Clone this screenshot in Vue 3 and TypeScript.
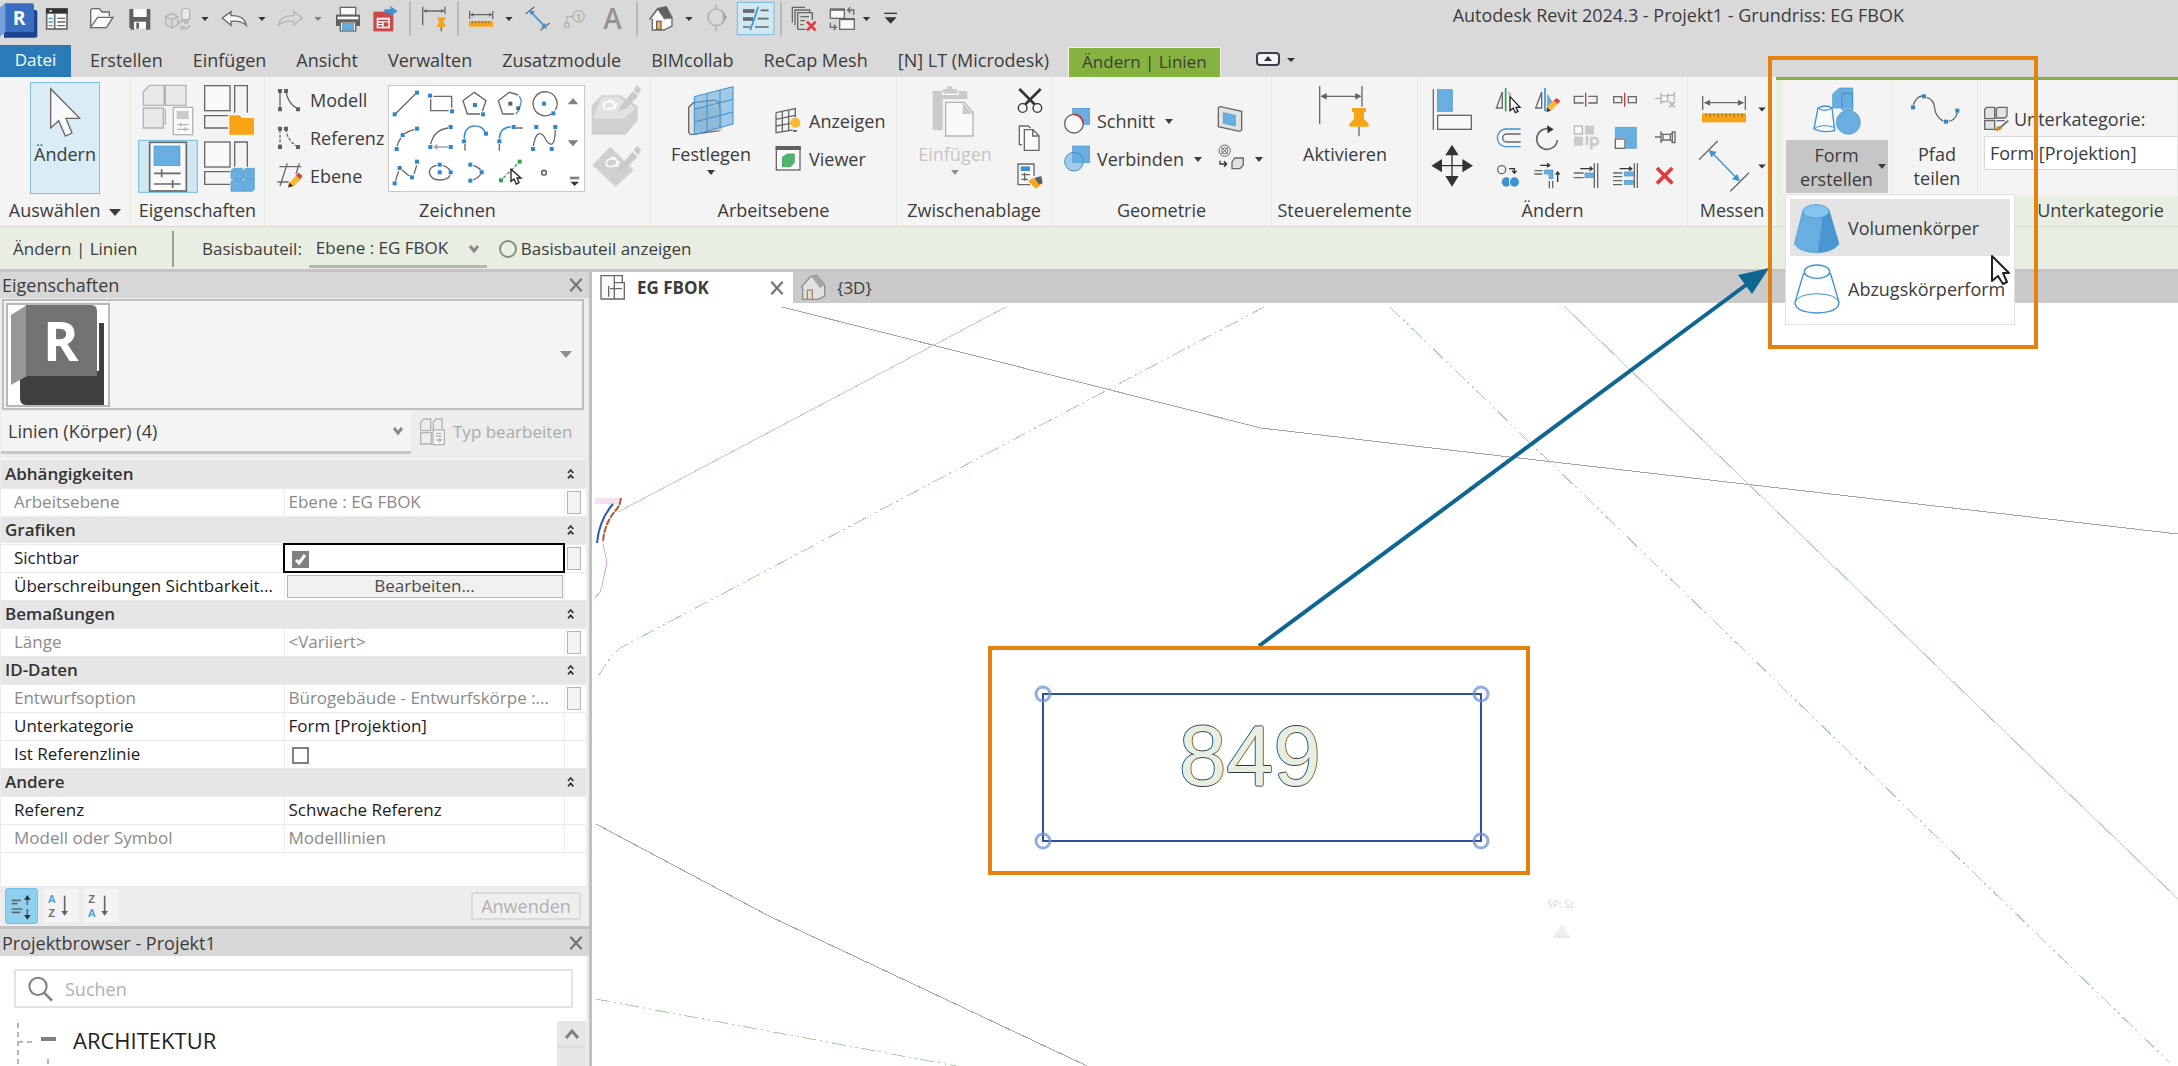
<script setup lang="ts">
import { h, ref } from 'vue'

type Icon = [number, number, number, number, string]

const P = (d: string, c = '') => `<path d="${d}" class="${c}"/>`
const R = (x: number, y: number, w: number, hh: number, c = '') =>
  `<rect x="${x}" y="${y}" width="${w}" height="${hh}" class="${c}"/>`
const C = (x: number, y: number, r: number, c = '') => `<circle cx="${x}" cy="${y}" r="${r}" class="${c}"/>`
const dots = (...xy: number[]) => {
  let s = ''
  for (let i = 0; i < xy.length; i += 2) s += R(xy[i] - 6, xy[i + 1] - 6, 12, 12, 'dot')
  return s
}
const arrow = (w: number, hh: number, c = 'ink'): Icon => [
  0, 0, w, hh, P(`M${w / 2 - 11} ${hh / 2 - 6}h22l-11 12z`, c),
]
const bar = (w: number): Icon => [0, 0, w, 114, P(`M${w / 2} 5v102`, 'sepline')]

const icons: Record<string, Icon> = {
  // quick access bar
  logo: [0, 0, 120, 114, P('M12 30h94q6 0 6 6v71q0 6-6 6H12z', 'navy') + P('M0 24L16 10h80q6 0 6 6v80H16L0 108z', 'royal') + P('M0 24L16 10v86L0 110z', 'sky') + '<text x="38" y="74" class="logor">R</text>'],
  menu: [120, 0, 105, 114, R(140, 27, 61, 60, 'k thick w') + R(138, 25, 65, 16, 'ink') + P('M148 33h8', 'ws') + P('M164 41v46', 'k thick') + P('M172 55h24M172 66h24M172 77h24', 'k') + P('M146 55h12M146 66h12M146 77h12', 'bs')],
  open: [225, 0, 138, 114, P('M272 80V30l4-4h22l8 10h22v12', 'k w') + P('M271 83l22-31h46l-20 31z', 'k w')],
  save: [363, 0, 111, 114, P('M388 27h63v62H394l-6-7z', 'kf') + R(400, 27, 40, 24, 'w') + R(402, 65, 36, 24, 'w') + R(409, 68, 8, 18, 'kf')],
  sync: [474, 0, 111, 114, P('M497 50l18-10 18 10v24l-18 10-18-10zM497 50l18 9 18-9M515 59v24', 'g') + P('M545 30q12-10 24 0v26q-12 8-24 0z', 'g gf') + P('M535 72q8-14 24-6M570 76q-8 14-24 8M560 58l4 10-12 2M545 92l-2-12 12 0', 'g')],
  undo: [645, 0, 111, 114, P('M667 54l26-19v12q40-2 46 29q-18-16-46-12v12z', 'k w')],
  redo: [816, 0, 108, 114, P('M907 54l-26-19v12q-40-2-46 29q18-16 46-12v12z', 'g')],
  print: [981, 0, 117, 114, R(1018, 22, 46, 24, 'k w') + P('M1005 44h72v34h-72z', 'kf') + R(1010, 50, 62, 8, 'w') + R(1018, 66, 46, 27, 'k w') + R(1024, 70, 34, 20, 'bf')],
  export: [1098, 0, 111, 114, R(1117, 35, 60, 59, 'redf') + R(1127, 53, 40, 32, 'w') + P('M1132 61h30M1132 70h12M1132 78h12', 'rs') + R(1148, 67, 14, 13, 'redf') + P('M1150 28h18V18l22 16-22 14V38h-18z', 'bd')],
  dimpin: [1245, 0, 108, 114, P('M1265 20v56M1332 20v22M1268 33h60', 'k') + P('M1268 33l9-6v12zM1329 33l-9-6v12z', 'kf') + P('M1309 52h24v7h-4v12l8 9h-32l8-9V59h-4z', 'of') + P('M1321 80v14', 'k')],
  ruler: [252, 0, 105, 114, P('M269 33v24M338 33v24M272 44h62', 'k') + P('M271 44l9-6v12zM336 44l-9-6v12z', 'kf') + R(267, 63, 72, 17, 'of') + P('M277 63v7M287 63v7M297 63v7M307 63v7M317 63v7M327 63v7', 'k thin')],
  meas: [420, 0, 111, 114, P('M440 41l26-20M484 91l28-22', 'k') + P('M456 36l42 44', 'bs thick') + P('M450 30l18 5-12 11zM504 86l-18-5 12-11z', 'bd')],
  tag: [531, 0, 114, 114, R(557, 70, 12, 12, 'g') + P('M563 70V50h20', 'g') + C(599, 49, 17, 'g') + '<text x="592" y="59" class="tagn">1</text>'],
  letter: [645, 0, 111, 114, '<text x="673" y="87" class="biga">A</text>'],
  house: [792, 0, 108, 114, P('M812 58l24-32 26-6 17 32v26l-24 12h-35V56', 'k w') + P('M836 26l26-6 17 36h-20z', 'kf') + R(833, 64, 13, 24, 'k yf') + P('M812 58l24-32 22 32', 'k')],
  diamond: [960, 0, 108, 114, C(1012, 52, 25, 'g thick') + P('M1012 14v12M1012 78v16', 'g thick') + P('M1026 28l18 24-18 24q12-24 0-48z', 'gd')],
  thin: [1068, 0, 126, 114, R(1075, 7, 110, 97, 'sel') + P('M1092 33h34', 'k xthick') + P('M1092 57h30', 'k xthick') + P('M1092 81h22M1145 31h24M1136 56h33M1128 81h41', 'k thick') + P('M1138 20l-24 70', 'bs thick')],
  closeh: [1218, 0, 117, 114, P('M1240 68V22h38M1248 76V30h44v10', 'k') + P('M1256 88V38h44v22M1256 88h24', 'k') + P('M1264 50h26M1264 62h14M1264 74h10', 'k') + P('M1284 65l26 26M1310 65l-26 26', 'rx')],
  switchw: [1335, 0, 105, 114, R(1354, 27, 42, 28, 'k w') + P('M1354 30h42', 'k thick') + R(1382, 56, 44, 32, 'k w') + P('M1382 58h44', 'k thick') + P('M1408 30h16v14M1414 22l-8 8 8 8M1354 68v14h16M1364 74l8 8-8 8', 'k')],
  custom: [1485, 0, 75, 114, P('M1516 40h38', 'inks') + P('M1517 52h36l-18 19z', 'ink')],
  arr60: arrow(60, 114),
  arr60g: arrow(60, 114, 'gd2'),
  arr45: arrow(45, 114),
  bar36: bar(36),
  bar24: bar(24),
  // select and properties panels
  cursor: [93, 249, 204, 177, P('M152 266v118l24-22 20 46 20-9-18-44h41z', 'k w')],
  props: [405, 240, 195, 177, P('M430 316v-40l18-20h44v60zM430 324h60v60h-60zM496 316v-60h62v60zM496 324v50', 'g gf') + R(520, 322, 58, 82, 'g w') + R(530, 333, 36, 24, 'gf2') + P('M532 374h34M542 368v12M532 388h34M556 382v12', 'g')],
  typeprops: [600, 240, 180, 177, R(614, 257, 76, 75, 'k w') + P('M704 338v-81h38v81', 'k') + P('M684 347h-70v37h70', 'k') + P('M688 346h30l8 8h36v50h-74z', 'of')],
  palette: [405, 417, 195, 168, R(416, 421, 176, 156, 'sel') + R(449, 427, 110, 146, 'k thick w') + R(462, 438, 78, 59, 'bf') + P('M462 520h80M485 508v24M462 552h80M518 540v24', 'k thick')],
  family: [600, 417, 180, 168, R(614, 426, 76, 75, 'k w') + P('M704 500v-74h38v74', 'k') + P('M690 515h-76v38h76', 'k') + P('M693 512l8-7h26v31h-34zM729 512l8-7h26v31h-34zM693 544l8-6h26v36h-34zM729 544l8-6h26v30l-6 6h-28z', 'bf')],
  // draw panel
  model: [801, 243, 123, 114, P('M840 276v48M858 274q4 34 34 52', 'k') + P('M834 267h12v12h-12zM852 267h12v12h-12zM834 322h12v12h-12zM888 322h12v12h-12z', 'kf')],
  refl: [801, 357, 123, 114, '<g stroke-dasharray="9 5">' + P('M840 390v48M858 388q4 34 34 52', 'k') + '</g>' + P('M834 380h12v12h-12zM852 380h12v12h-12zM834 435h12v12h-12zM888 435h12v12h-12z', 'kf')],
  level: [801, 471, 123, 114, P('M838 500h66M832 546h34M862 490l-22 68M898 490l-10 32', 'k') + P('M868 548l22-24 14 12-22 22-16 6z', 'yf') + P('M888 526l8-8 12 10-8 10z', 'redf') + P('M864 562l4-14 12 10z', 'ink')],
  line: [29, 258, 102, 105, P('M50 340L112 278', 'k') + dots(46, 343, 113, 278)],
  rect: [132, 258, 102, 105, P('M160 289h55v34M206 332h-54v-34', 'k') + dots(150, 287, 216, 334)],
  pent1: [236, 258, 102, 105, P('M309 334l11-32-35-25-34 25 13 40h38', 'k') + dots(287, 315, 311, 343)],
  pent2: [339, 258, 102, 105, P('M415 285l-27-8-33 25 13 40h34', 'k') + P('M418 288l6 14-6 26-10 14', 'bs') + R(385, 305, 12, 12, 'kf') + R(409, 319, 11, 11, 'kf')],
  circle: [443, 258, 102, 105, P('M528 330a36 36 0 1 0-12 12', 'k') + dots(494, 311, 522, 340)],
  arc1: [29, 363, 102, 105, P('M53 438q4-14 12-24M77 400q12-8 28-11', 'k') + dots(52, 447, 70, 405, 113, 386)],
  arc2: [132, 363, 102, 105, P('M152 432q10-42 52-48', 'k') + P('M204 441h-40M172 434l-9 7 9 7', 'gs') + dots(151, 441, 212, 441, 212, 381)],
  arc3: [236, 363, 102, 105, P('M255 416q0-38 32-38 22 0 30 18', 'bs thick') + P('M257 432v20', 'k') + dots(254, 424, 320, 401)],
  arc4: [339, 363, 102, 105, P('M358 416q2-34 34-35', 'bs thick') + P('M358 432v20M408 384h20', 'k') + dots(358, 424, 401, 381)],
  spline: [443, 363, 102, 105, P('M462 438q8-44 24-36 8 4 14 18 8 14 18 12 8-2 10-42', 'k') + dots(461, 447, 471, 381, 528, 381, 517, 447)],
  spline2: [29, 468, 102, 105, P('M49 542l4-14 5-14M68 510l22 18M104 522l8-26', 'k') + dots(46, 550, 61, 504, 98, 532, 113, 485)],
  ellipse: [132, 468, 102, 105, P('M170 496q-22 4-22 22 4 22 32 22 24 0 30-14M188 496q14 4 22 14', 'k') + dots(179, 494, 179, 517, 212, 517)],
  parc: [236, 468, 102, 105, P('M282 496q16 6 22 14M304 524q-8 10-22 16', 'k') + dots(273, 494, 307, 517, 273, 542)],
  pick: [339, 468, 102, 105, P('M370 534L412 492', 'gr') + R(357, 535, 12, 12, 'grf') + R(413, 479, 12, 12, 'grf') + P('M393 508v36l9-7 7 15 8-4-6-14h12z', 'inkc')],
  point: [443, 468, 102, 105, C(494, 518, 7, 'k thick')],
  up: [546, 270, 66, 90, P('M563 325h32l-16-18z', 'gd2')],
  down: [546, 390, 66, 90, P('M563 430h32l-16 18z', 'gd2')],
  more: [546, 500, 66, 72, P('M570 533h28', 'gd3') + P('M571 544h26l-13 13z', 'ink')],
  ghost1: [618, 243, 177, 171, P('M638 316l30-30h56l52 32v44l-36 42H638z', 'gf3') + P('M668 290h52l50 34-36 32H642z', 'gf4') + P('M702 306q-26-6-28 10t22 10q16-4 16-16M690 300q18 0 18 28', 'ws thick') + P('M724 318l38-44 16 14-38 38-22 8z', 'gf2') + P('M764 270l10-14 12 10-8 18z', 'gf2')],
  ghost2: [618, 414, 177, 171, P('M640 496l54-56 70 70-54 50z', 'gf3') + P('M710 478q-26-6-28 10t22 10q16-4 16-16M698 472q18 0 18 28', 'ws thick') + P('M722 500l38-44 16 14-38 38-20 8z', 'gf2') + P('M764 450l10-12 12 10-8 18z', 'gf2')],
  // work plane
  workplane: [891, 231, 204, 195, P('M926 322l14-14 64-8 14 8v84l-84 12-8-6z', 'k gf4') + P('M942 322h84v70h-84z', 'gf2') + P('M943 290l116-30v112l-116 32zM981 280v112M1020 270v112M943 328l116-30M943 366l116-30', 'bt')],
  show: [1179, 306, 99, 114, P('M1188 338l58-12v26M1188 338v60l50-8M1207 334v60M1226 330v60M1188 358l58-12M1188 378l44-8', 'k') + C(1246, 368, 15, 'yf') + P('M1240 390h10v6h-10z', 'kf')],
  viewer: [1179, 420, 99, 114, R(1189, 440, 71, 70, 'k w') + R(1187, 438, 75, 12, 'kf') + P('M1207 472l14-10h22v26l-12 12h-24z', 'grn')],
  // clipboard
  paste: [117, 231, 216, 195, P('M158 273h30v-6h14v-8h14v8h14v6h32v24h-74v94h-30z', 'gf2') + P('M188 275v8h46v-8', 'ws') + P('M197 307h56l26 30v71h-82z', 'g w') + P('M248 308v34h30z', 'gf2')],
  cut: [393, 243, 117, 114, P('M418 267l46 46M482 267l-46 46', 'inks xt') + C(428, 324, 13, 'inks') + C(472, 324, 13, 'inks')],
  copy: [393, 357, 117, 114, P('M426 434h-8v-56h26l8 6', 'k w') + P('M433 389h26l18 18v44h-44z', 'k w') + P('M458 389v19h19', 'k')],
  match: [393, 471, 117, 114, P('M450 554h-36v-62h48v36', 'k w') + R(422, 499, 28, 14, 'bd') + P('M424 524h26M434 518v24M424 538h20', 'k') + P('M444 544l14-10 24 20-14 12z', 'of') + P('M462 534l22-6 4 22-10 4z', 'kf')],
  // geometry
  cutgeo: [540, 306, 105, 114, R(578, 325, 51, 48, 'bf') + C(582, 371, 28, 'w k') + P('M582 343a28 28 0 0 1 27 27', 'rs thick')],
  join: [540, 420, 105, 114, R(578, 438, 51, 50, 'bf') + C(582, 485, 28, 'bt')],
  wall: [1005, 306, 90, 114, P('M1015 322l6-2 64 14v56l-6 4-64-14z', 'k gf4') + P('M1030 338l36 8v32l-36-8z', 'bf')],
  split: [1005, 420, 90, 114, C(1034, 452, 17, 'k thin') + P('M1024 442l20 20M1044 442l-20 20', 'k thin') + C(1034, 452, 9, 'k thin') + P('M1020 482v10h18M1032 484l8 8-8 8', 'inks') + P('M1056 486l8-12h26v20l-10 12h-24z', 'k gf4')],
  activate: [1269, 231, 252, 195, P('M1319 258v114M1446 258v62M1324 289h118', 'k') + P('M1322 289l18-10v20zM1444 289l-18-10v20z', 'kf') + P('M1416 324h42v12h-6v20l14 16v8h-58v-8l14-16v-20h-6z', 'of') + P('M1437 381v28', 'k')],
  // modify
  align: [117, 243, 210, 171, P('M163 268v121', 'k') + R(175, 269, 45, 65, 'bf') + R(176, 346, 101, 42, 'k w')],
  move: [117, 414, 210, 171, P('M219 450v90M175 497h90', 'inks') + P('M219 434l20 32h-40zM219 560l20-32h-40zM157 497l32-20v40zM282 497l-32-20v40z', 'ink')],
  mirp: [327, 243, 117, 114, P('M370 276v48h-18z', 'k') + P('M380 264v70', 'grs') + P('M388 276l8 10', 'gs') + P('M393 290v42l10-8 6 14 8-4-6-12h12z', 'inkc')],
  mird: [444, 243, 117, 114, P('M488 276v48h-18z', 'k') + P('M498 264v70', 'bs thick') + P('M506 284l14 24-14 14z', 'bf') + P('M504 320l20-20 12 12-20 20z', 'yf') + P('M524 302l8-8 12 8-8 10z', 'redf') + P('M502 336l2-14 12 10z', 'ink')],
  split1: [561, 243, 117, 114, P('M614 289h-28v20h28M628 289h26v20h-26', 'k') + P('M620 278v42', 'rs')],
  split2: [678, 243, 117, 114, R(704, 290, 24, 18, 'k') + R(748, 290, 24, 18, 'k') + P('M737 278v42', 'rs')],
  unpin: [795, 243, 117, 114, P('M828 295h16M846 278v34M846 286l20 2v16l-20 2M866 280v18M886 276v24M866 286h18', 'g') + P('M870 304l18 18M888 304l-18 18', 'g thick')],
  offset: [327, 357, 117, 114, P('M425 387h-48a27 27 0 0 0 0 53h48', 'bs') + P('M425 402h-42a11 11 0 0 0 0 24h42', 'k')],
  rotate: [444, 357, 117, 114, P('M535 420a31 31 0 1 1-16-30', 'k thick') + P('M504 376l20 12-18 12z', 'ink')],
  array: [561, 357, 117, 114, R(586, 378, 24, 24, 'g w') + R(618, 377, 27, 27, 'gf2') + R(585, 410, 27, 27, 'gf2') + P('M624 408v28', 'gf2s') + P('M637 448v-34h10a9 9 0 0 1 0 20h-10', 'gf2s')],
  scale: [678, 357, 117, 114, P('M709 382h63v63h-30v-33h-33z', 'bf') + R(709, 417, 29, 28, 'k w')],
  pin: [795, 357, 117, 114, P('M828 411h18M846 394v35M846 400l6 3h22l6-4M846 424l6-4h22l6 4M852 403v17M874 403v17', 'k') + P('M880 396h8v32h-8z', 'k')],
  copymul: [327, 471, 117, 114, C(368, 509, 12, 'k') + P('M390 506h16v12M399 512l7 8 7-8', 'inks') + C(382, 546, 14, 'bd') + C(406, 546, 14, 'bd') + P('M394 534q-6 12 0 24', 'ws thin')],
  corner: [444, 471, 117, 114, P('M466 512h24M466 522h24M511 543v22M521 543v22', 'k') + P('M496 510h26v26h-12v-14h-14z', 'bf') + P('M484 496h26M504 490l8 6-8 6M536 546v-26M530 524l6-8 6 8', 'inks')],
  trim: [561, 471, 117, 114, P('M584 519h30M584 533h30M646 490v74M656 490v74', 'k') + R(618, 519, 26, 14, 'bf') + P('M604 506h34M632 500l8 6-8 6', 'inks')],
  trimm: [678, 471, 117, 114, P('M702 519h28M702 530h28M702 542h28M702 554h28M766 490v74M775 490v74', 'k') + R(736, 516, 28, 12, 'bf') + R(736, 541, 28, 12, 'bf') + P('M722 506h34M750 500l8 6-8 6', 'inks')],
  del: [795, 471, 117, 114, P('M834 504l46 46M880 504l-46 46', 'delx')],
  measr: [936, 243, 180, 171, P('M968 288v42M1096 288v42M974 308h116', 'k') + P('M972 308l18-9v18zM1092 308l-18-9v18z', 'kf') + R(966, 340, 132, 27, 'of') + P('M978 340v8M990 340v12M1002 340v8M1014 340v12M1026 340v8M1038 340v12M1050 340v8M1062 340v12M1074 340v8M1086 340v12', 'k thin')],
  measd: [936, 414, 180, 171, P('M957 479l56-56M1051 574l56-56', 'k') + P('M994 456l78 80', 'bs') + P('M986 450l24 6-16 16zM1080 544l-24-6 16-16z', 'bd')],
  arr60b: arrow(60, 171),
  // form
  form: [138, 231, 306, 195, P('M278 282l20-18h40v60h-60z', 'bf') + P('M306 280h32v50h-32z', 'bt') + P('M234 324l-12 62q24 14 62 6l-8-68q-18-12-42 0q18 14 42 0', 'bs w') + P('M222 386q20-16 62-4', 'bs thin') + C(325, 367, 36, 'bf')],
  path: [471, 231, 240, 195, P('M520 314q10-24 26-26M560 292q22 6 24 32t26 40M626 364q20-2 26-26', 'k') + dots(519, 322, 552, 289, 618, 365, 652, 332)],
  subcat: [723, 306, 90, 102, P('M731 356v-28l6-6h24v34zM766 354v-28l6-4h26v26l-6 6zM731 362h30v26h-30zM766 362h26', 'k gf4') + P('M802 362l-26 22', 'k thick') + P('M762 392q4-14 14-14l6 6q-4 10-20 8', 'brn')],
  solid: [157, 606, 153, 156, P('M190 630q40-32 78 0l30 102q-20 26-68 26-48 0-66-26z', 'bf') + P('M249 648l19-18 30 102q-20 24-64 26z', 'bdk') + '<ellipse cx="229" cy="634" rx="39" ry="20" class="blt"/>'],
  voidf: [157, 790, 153, 156, P('M192 820l-26 88q0 30 66 32 66-2 66-32l-26-88', 'bs') + '<ellipse cx="232" cy="816" rx="38" ry="20" class="bs"/>' + P('M166 908q8-24 66-26 58 2 66 26', 'bs thin')],
  plan: [0, 0, 78, 84, P('M3 5h40v70H3zM43 26h30v49H26', 'k w') + P('M43 5h24v20M26 36v32M30 44h36', 'k')],
  home3: [0, 0, 78, 84, P('M3 40L32 8l18-4 24 30v32l-20 10H8V40', 'gd5 gf4') + P('M34 8l16-4 24 30-14 8z', 'gd') + R(22, 48, 15, 28, 'gd5 yl')],
  typ: [0, 0, 84, 84, P('M5 38V12L15 3h20v35zM5 44h32v34H5zM43 36V12l8-9h18v30', 'g') + R(42, 36, 34, 44, 'g w') + P('M50 46h18M50 54h18M50 66h16M60 60l7 6-7 6', 'g')],
  srt1: [0, 0, 93, 102, P('M17 34h28M17 44h18M17 60h32M17 70h26', 'k thick') + P('M64 28v20M64 60v20', 'k thick') + P('M64 18l10 14H54zM64 92l10-14H54z', 'ink')],
  srt2: [0, 0, 102, 102, '<text x="11" y="42" class="sb">A</text><text x="13" y="83" class="sk">Z</text>' + P('M62 20v54', 'k thick') + P('M62 80l10-14H52z', 'kf')],
  srt3: [0, 0, 102, 102, '<text x="13" y="42" class="sk">Z</text><text x="11" y="83" class="sb">A</text>' + P('M62 20v54', 'k thick') + P('M62 80l10-14H52z', 'kf')],
  lens: [0, 0, 78, 78, C(30, 31, 26, 'k thick2') + P('M48 50l24 24', 'k thick2 xt')],
  x: [0, 0, 48, 48, P('M7 5l34 38M41 5L7 43', 'xx')],
  chev2: [0, 0, 30, 42, P('M6 18l8-9 8 9M6 34l8-9 8 9', 'inks thick')],
}

const Ico = (props: { n: string }) => {
  const [x, y, w, hh, html] = icons[props.n]
  return h('svg', {
    class: 'ico',
    viewBox: `${x} ${y} ${w} ${hh}`,
    width: w / 3,
    height: hh / 3,
    'aria-hidden': 'true',
    innerHTML: html,
  })
}
Ico.props = ['n']

const quick: [string, string][] = [
  ['logo', 'Revit'], ['menu', 'Start'], ['open', 'Öffnen'], ['save', 'Speichern'], ['sync', 'Synchronisieren'],
  ['arr60', 'Sync-Optionen'], ['undo', 'Rückgängig'], ['arr60', 'Rückgängig-Liste'], ['redo', 'Wiederherstellen'],
  ['arr60g', 'Wiederherstellen-Liste'], ['print', 'Drucken'], ['export', 'PDF-Export'], ['bar36', ''],
  ['dimpin', 'Steuerelemente'], ['bar36', ''], ['ruler', 'Messen'], ['arr60', 'Messoptionen'], ['meas', 'Bemaßung'],
  ['tag', 'Beschriftung'], ['letter', 'Text'], ['bar36', ''], ['house', '3D-Ansicht'], ['arr60', '3D-Optionen'],
  ['diamond', 'Schnitt'], ['thin', 'Dünne Linien'], ['bar24', ''], ['closeh', 'Verdeckte schließen'],
  ['switchw', 'Fenster wechseln'], ['arr45', 'Fensterliste'], ['custom', 'Anpassen'],
]
const tabs = ['Erstellen', 'Einfügen', 'Ansicht', 'Verwalten', 'Zusatzmodule', 'BIMcollab', 'ReCap Mesh', '[N] LT (Microdesk)']
const drawTools = [
  'line', 'rect', 'pent1', 'pent2', 'circle', 'arc1', 'arc2', 'arc3', 'arc4', 'spline',
  'spline2', 'ellipse', 'parc', 'pick', 'point',
]
const modTools = [
  'mirp', 'mird', 'split1', 'split2', 'unpin', 'offset', 'rotate', 'array', 'scale', 'pin',
  'copymul', 'corner', 'trim', 'trimm', 'del',
]
const drawModes: [string, string][] = [['model', 'Modell'], ['refl', 'Referenz'], ['level', 'Ebene']]

interface Row { name: string; value?: string; kind?: 'check' | 'button'; dim?: boolean; btn?: boolean }
const groups: { title: string; rows: Row[] }[] = [
  { title: 'Abhängigkeiten', rows: [{ name: 'Arbeitsebene', value: 'Ebene : EG FBOK', dim: true, btn: true }] },
  { title: 'Grafiken', rows: [
    { name: 'Sichtbar', kind: 'check', btn: true },
    { name: 'Überschreibungen Sichtbarkeit...', kind: 'button', value: 'Bearbeiten...' },
  ] },
  { title: 'Bemaßungen', rows: [{ name: 'Länge', value: '<Variiert>', dim: true, btn: true }] },
  { title: 'ID-Daten', rows: [
    { name: 'Entwurfsoption', value: 'Bürogebäude - Entwurfskörpe :...', dim: true, btn: true },
    { name: 'Unterkategorie', value: 'Form [Projektion]' },
    { name: 'Ist Referenzlinie', kind: 'check' },
  ] },
  { title: 'Andere', rows: [
    { name: 'Referenz', value: 'Schwache Referenz' },
    { name: 'Modell oder Symbol', value: 'Modelllinien', dim: true },
  ] },
]
const checks = ref<Record<string, boolean>>({ Sichtbar: true, 'Ist Referenzlinie': false })
const search = ref('')
</script>

<template>
  <div class="app">
    <header class="top">
      <div class="quick">
        <template v-for="([n, label], i) in quick" :key="i">
          <button v-if="label" :aria-label="label"><Ico :n="n" /></button>
          <Ico v-else :n="n" />
        </template>
        <h1>Autodesk Revit 2024.3 - Projekt1 - Grundriss: EG FBOK</h1>
      </div>
      <nav class="tabs">
        <button class="file">Datei</button>
        <button v-for="t in tabs" :key="t">{{ t }}</button>
        <button class="active">Ändern | Linien</button>
        <button class="fold" aria-label="Multifunktionsleiste minimieren">
          <svg width="40" height="16" viewBox="0 0 40 16"><rect x="1" y="2" width="22" height="12" rx="3" fill="#f4f4f8" stroke="#3a3f50" stroke-width="2" /><path d="M8 10h8l-4-5zM31 7h8l-4 4z" fill="#333" /></svg>
        </button>
      </nav>
    </header>

    <div class="ribbon">
      <section class="panel p-select">
        <div class="body">
          <button class="big on"><Ico n="cursor" /><span>Ändern</span></button>
        </div>
        <h2>Auswählen <i class="tri"></i></h2>
      </section>
      <section class="panel p-props">
        <div class="body grid2">
          <button v-for="n in ['props', 'typeprops', 'palette', 'family']" :key="n" :aria-label="n"><Ico :n="n" /></button>
        </div>
        <h2>Eigenschaften</h2>
      </section>
      <section class="panel p-draw">
        <div class="body rows3">
          <div class="modes">
            <button v-for="[n, t] in drawModes" :key="n" class="small"><Ico :n="n" />{{ t }}</button>
          </div>
          <div class="gallery">
            <div class="cells">
              <button v-for="n in drawTools" :key="n" :aria-label="n"><Ico :n="n" /></button>
            </div>
            <div class="scroll">
              <button aria-label="Nach oben"><Ico n="up" /></button>
              <button aria-label="Nach unten"><Ico n="down" /></button>
              <button aria-label="Mehr"><Ico n="more" /></button>
            </div>
          </div>
          <div class="col">
            <button disabled aria-label="Auf Fläche zeichnen"><Ico n="ghost1" /></button>
            <button disabled aria-label="Auf Arbeitsebene zeichnen"><Ico n="ghost2" /></button>
          </div>
        </div>
        <h2>Zeichnen</h2>
      </section>
      <section class="panel p-plane">
        <div class="body">
          <button class="big festlegen"><Ico n="workplane" /><span>Festlegen</span><i class="tri small-tri"></i></button>
          <div class="rows2">
            <button class="small"><Ico n="show" />Anzeigen</button>
            <button class="small"><Ico n="viewer" />Viewer</button>
          </div>
        </div>
        <h2>Arbeitsebene</h2>
      </section>
      <section class="panel p-clip">
        <div class="body">
          <button class="big paste" disabled><Ico n="paste" /><span>Einfügen</span><i class="tri small-tri gray"></i></button>
          <div class="col rows3">
            <button v-for="n in ['cut', 'copy', 'match']" :key="n" :aria-label="n"><Ico :n="n" /></button>
          </div>
        </div>
        <h2>Zwischenablage</h2>
      </section>
      <section class="panel p-geo">
        <div class="body">
          <div class="rows2 geo1">
            <button class="small"><Ico n="cutgeo" />Schnitt <i class="tri small-tri"></i></button>
            <button class="small"><Ico n="join" />Verbinden <i class="tri small-tri"></i></button>
          </div>
          <div class="rows2">
            <button class="small" aria-label="Fläche"><Ico n="wall" /></button>
            <button class="small" aria-label="Abbruch"><Ico n="split" /><i class="tri small-tri"></i></button>
          </div>
        </div>
        <h2>Geometrie</h2>
      </section>
      <section class="panel p-ctl">
        <div class="body">
          <button class="big act"><Ico n="activate" /><span>Aktivieren</span></button>
        </div>
        <h2>Steuerelemente</h2>
      </section>
      <section class="panel p-mod">
        <div class="body rows3">
          <div class="col">
            <button aria-label="Ausrichten"><Ico n="align" /></button>
            <button aria-label="Verschieben"><Ico n="move" /></button>
          </div>
          <div class="grid5">
            <button v-for="n in modTools" :key="n" :aria-label="n"><Ico :n="n" /></button>
          </div>
        </div>
        <h2>Ändern</h2>
      </section>
      <section class="panel p-meas">
        <div class="body rows3 wrap">
          <button aria-label="Messen"><Ico n="measr" /></button><button aria-label="Messoptionen"><Ico n="arr60b" /></button>
          <button aria-label="Bemaßung"><Ico n="measd" /></button><button aria-label="Bemaßungsoptionen"><Ico n="arr60b" /></button>
        </div>
        <h2>Messen</h2>
      </section>
      <div class="context">
        <section class="panel p-form">
          <div class="body">
            <button class="big create">
              <Ico n="form" />
              <span class="pressed"><span>Form<br />erstellen</span><i class="tri small-tri"></i></span>
            </button>
            <ul class="menu">
              <li><button class="hot"><Ico n="solid" />Volumenkörper</button></li>
              <li><button><Ico n="voidf" />Abzugskörperform</button></li>
            </ul>
          </div>
        </section>
        <section class="panel p-path">
          <div class="body">
            <button class="big"><Ico n="path" /><span>Pfad<br />teilen</span></button>
          </div>
        </section>
        <section class="panel p-sub">
          <div class="body subbody">
            <label for="subcat"><Ico n="subcat" />Unterkategorie:</label>
            <select id="subcat"><option>Form [Projektion]</option></select>
          </div>
          <h2>Unterkategorie</h2>
        </section>
      </div>
    </div>

    <div class="options">
      <span class="mode">Ändern | Linien</span>
      <label for="host">Basisbauteil:</label>
      <span class="sel">
        <select id="host"><option>Ebene : EG FBOK</option></select>
        <svg class="chev" width="12" height="10" viewBox="0 0 12 10"><path d="M2 2l4 5 4-5" /></svg>
      </span>
      <label class="radio"><input type="radio" name="showhost" />Basisbauteil anzeigen</label>
    </div>

    <div class="work">
      <aside>
        <section class="props">
          <div class="bar"><h3>Eigenschaften</h3><button aria-label="Schließen"><Ico n="x" /></button></div>
          <div class="preview">
            <svg width="104" height="104" viewBox="0 0 104 104">
              <rect x="1" y="1" width="102" height="102" fill="#fff" stroke="#b8b8b8" stroke-width="2" />
              <path d="M14 68h79V20h5v82H20q-6 0-6-7z" fill="#3f3f3f" />
              <path d="M5 12L21 2v71L5 82z" fill="#979797" />
              <path d="M20 2h65q6 0 6 6v65H20z" fill="#727272" />
              <text x="37" y="58" class="big-r">R</text>
            </svg>
            <i class="tri gray"></i>
          </div>
          <div class="type">
            <span class="typesel">
              <select aria-label="Typ"><option>Linien (Körper) (4)</option></select>
              <svg class="chev" width="12" height="10" viewBox="0 0 12 10"><path d="M2 2l4 5 4-5" /></svg>
            </span>
            <button disabled><Ico n="typ" />Typ bearbeiten</button>
          </div>
          <div class="tablebox">
            <table>
              <colgroup><col class="c1" /><col /><col class="c3" /></colgroup>
              <tbody v-for="g in groups" :key="g.title">
                <tr class="group"><th colspan="2">{{ g.title }}</th><th><Ico n="chev2" /></th></tr>
                <tr v-for="r in g.rows" :key="r.name" :class="{ dim: r.dim }">
                  <td class="name">{{ r.name }}</td>
                  <td :class="{ focus: r.name === 'Sichtbar' }">
                    <input v-if="r.kind === 'check'" v-model="checks[r.name]" type="checkbox" :aria-label="r.name" />
                    <button v-else-if="r.kind === 'button'" class="edit">{{ r.value }}</button>
                    <template v-else>{{ r.value }}</template>
                  </td>
                  <td class="end"><button v-if="r.btn" aria-label="Zuordnen"></button></td>
                </tr>
              </tbody>
            </table>
          </div>
          <div class="tools">
            <button class="lit" aria-label="Gruppieren"><Ico n="srt1" /></button>
            <button aria-label="Aufsteigend"><Ico n="srt2" /></button>
            <button aria-label="Absteigend"><Ico n="srt3" /></button>
            <button class="apply" disabled>Anwenden</button>
          </div>
        </section>
        <section class="browser">
          <div class="bar"><h3>Projektbrowser - Projekt1</h3><button aria-label="Schließen"><Ico n="x" /></button></div>
          <div class="search"><Ico n="lens" /><input v-model="search" type="text" placeholder="Suchen" aria-label="Suchen" /></div>
          <div class="tree">
            <svg width="58" height="46" viewBox="0 0 58 46"><path d="M18 2v44M18 21h18M48 38v8" stroke="#b5b5b5" stroke-width="2" stroke-dasharray="5 4" fill="none" /><path d="M41 18h15" stroke="#808080" stroke-width="4" /></svg>
            <span>ARCHITEKTUR</span>
            <div class="sbar"><button aria-label="Nach oben"><svg width="16" height="12" viewBox="0 0 16 12"><path d="M2 10l6-7 6 7" stroke="#808080" stroke-width="3" fill="none" /></svg></button></div>
          </div>
        </section>
      </aside>

      <main>
        <div class="doctabs">
          <button class="cur"><Ico n="plan" /><b>EG FBOK</b><Ico n="x" /></button>
          <button><Ico n="home3" />{3D}</button>
        </div>
        <div class="canvas">
          <svg viewBox="592 303 1586 763" preserveAspectRatio="xMinYMin slice">
            <g fill="none" stroke-width="1" shape-rendering="crispEdges">
              <path d="M782 307L1261 428L1380 442L2178 534M596 824L769 916L1087 1066" stroke="#a4a4a4" />
              <path d="M1006 307L618 512M1564 306L2178 899" stroke="#b4d8b1" />
              <path d="M1264 307L620 648L610 658L597 678M1390 307L2169 1062M596 999L956 1066" stroke="#a9d2a6" stroke-dasharray="14 4 2 4 2 4" />
              <path d="M603 544L607 562L602 586L600 592L595 598" stroke="#dcaad2" />
            </g>
            <path d="M595 501h26" stroke="#f5e0f0" stroke-width="6" />
            <path d="M621 498q-1 8-5 12q-12 14-13 32" fill="none" stroke="#b0583a" stroke-width="2" stroke-dasharray="7 1" />
            <path d="M613 504q-14 16-16 39" fill="none" stroke="#2d5ab4" stroke-width="2" />
            <g fill="none" stroke="#2c4f9f" stroke-width="2"><rect x="1043" y="694" width="438" height="147" /></g>
            <g fill="none" stroke="#6c93d0" stroke-opacity="0.75" stroke-width="3">
              <circle cx="1043" cy="694" r="7" /><circle cx="1481" cy="694" r="7" /><circle cx="1043" cy="841" r="7" /><circle cx="1481" cy="841" r="7" />
            </g>
            <text x="1547" y="908" class="faint">SP: Sz</text>
            <path d="M1562 924l8 13h-17z" fill="#efefef" />
            <path d="M1553 937h17" stroke="#dcdcdc" />
          </svg>
          <span class="num">849</span>
        </div>
      </main>
    </div>

    <svg class="marks" aria-hidden="true">
      <path d="M1259 646L1750 282" stroke="#0f6690" stroke-width="4" />
      <path d="M1769 268L1752 294L1738 275z" fill="#0f6690" />
      <g fill="none" stroke="#e5810f" stroke-width="4"><rect x="1770" y="58" width="266" height="289" /><rect x="990" y="648" width="538" height="225" /></g>
      <path d="M1992 256v25l6-5 5 8 4-2-4-9h6z" fill="#fff" stroke="#222" stroke-width="2" stroke-linejoin="round" />
    </svg>
  </div>
</template>

<style scoped>
.app {
  position: relative;
  display: flex;
  flex-direction: column;
  height: 100vh;
  overflow: hidden;
  background: #fff;
  color: #3c3c3c;
  font: 18px/24px "Open Sans", "Noto Sans", sans-serif;
}
button {
  padding: 0;
  border: 0;
  background: none;
  color: inherit;
  font: inherit;
  white-space: nowrap;
}
h1, h2, h3 { margin: 0; font: inherit; white-space: nowrap; }
select {
  appearance: none;
  border: 0;
  background: none;
  color: inherit;
  font: inherit;
}
.top { background: #d9d9d9; }
.quick { display: flex; height: 45px; }
.quick button, .quick > svg { flex: none; height: 38px; }
.quick h1 { margin: 3px 274px 0 auto; }
.tabs { display: flex; height: 32px; }
.tabs button { padding: 0 15px 2px; height: 32px; }
.tabs .file { width: 71px; padding: 0 0 2px; margin-right: 4px; background: #2a7ab8; color: #fff; font-size: 17px; }
.tabs .active { align-self: flex-end; height: 30px; padding: 0 13px 2px; margin-left: 4px; border: 1px solid #edf5e0; border-bottom: 0; background: #86b340; font-size: 17px; }
.tabs .fold { margin-left: 20px; }

.ribbon { display: flex; flex: none; height: 149px; background: #f4f4f4; border-bottom: 1px solid #d6dacf; }
.panel { flex: none; display: flex; flex-direction: column; border-right: 1px solid #e6ebdf; box-sizing: border-box; }
.panel h2 { height: 30px; line-height: 28px; text-align: center; }
.body { display: flex; height: 119px; }
.body button { display: flex; }
.panel .big { flex-direction: column; align-items: center; }
.big span { text-align: center; height: 24px; }
.p-select { width: 131px; }
.p-select .body { justify-content: center; padding-top: 5px; box-sizing: border-box; }
.p-select .on { width: 70px; height: 112px; background: #daecf5; border: 1px solid #7fc1e6; }
.p-props { width: 134px; }
.grid2 { display: grid; grid-template-columns: 65px 60px; grid-template-rows: 59px 56px; padding: 3px 0 0 4px; box-sizing: border-box; }
.p-draw { width: 386px; }
.rows3 { padding-top: 4px; box-sizing: border-box; }
.modes { width: 123px; padding-left: 2px; box-sizing: border-box; }
.small { align-items: center; gap: 4px; height: 38px; }
.modes .small { gap: 2px; }
.gallery { display: flex; width: 197px; height: 107px; margin-top: 4px; background: #fff; border: 1px solid #c9c9c9; box-sizing: border-box; }
.cells { flex: 1; display: grid; grid-template-columns: repeat(5, 1fr); }
.scroll { width: 22px; display: flex; flex-direction: column; justify-content: space-between; }
.col { display: flex; flex-direction: column; }
.p-plane { width: 246px; }
.festlegen { width: 68px; margin: 0 28px 0 26px; }
.rows2 { padding-top: 25px; }
.p-plane .small { gap: 3px; }
.p-clip { width: 155px; }
.paste { width: 72px; margin: 0 20px 0 22px; color: #c4c4c4; }
.p-geo { width: 220px; }
.geo1 { width: 163px; padding-left: 8px; box-sizing: border-box; }
.p-geo .small { gap: 2px; }
.p-geo .small .tri { margin-left: 8px; }
.p-ctl { width: 146px; }
.act { width: 84px; margin-left: 31px; }
.p-mod { width: 270px; }
.grid5 { display: grid; grid-template-columns: repeat(5, 39px); grid-auto-rows: 38px; }
.p-meas { width: 88px; border: 0; }
.wrap { display: grid; grid-template-columns: 60px 20px; grid-auto-rows: 57px; padding-left: 4px; }
.context { flex: 1; min-width: 0; display: flex; padding-left: 7px; height: 149px; border-top: 3px solid #84b041; background: #e9eee3; box-sizing: border-box; }
.context .panel { background: #f4f4f4; height: 116px; }
.context .body { height: 116px; flex: none; }
.context .big svg { margin-top: -3px; }
.p-form { width: 110px; position: relative; }
.create { margin-left: 3px; }
.create .pressed { display: flex; align-items: center; justify-content: center; gap: 5px; width: 102px; height: 53px; background: #c6c6c6; margin-top: -2px; }
.create .pressed span { height: 48px; padding-left: 12px; }
.p-path { width: 85px; }
.p-path .big { margin-left: 4px; }
.context .p-sub { flex: 1; min-width: 0; overflow: hidden; height: 146px; background: #e9eee3; }
.subbody { flex-direction: column; background: #f4f4f4; padding: 22px 0 0 4px; box-sizing: border-box; width: 245px; }
.subbody label { display: flex; align-items: center; height: 34px; gap: 2px; }
.subbody select { margin-left: 2px; height: 34px; padding: 0 5px; background: #fff; border: 1px solid #d9d9d9; flex: none; }
.p-sub h2 { width: 245px; flex: none; }
.menu { position: absolute; left: 2px; top: 114px; z-index: 2; width: 230px; height: 131px; margin: 0; padding: 4px; box-sizing: border-box; list-style: none; background: #fff; border: 1px solid #e0e0e0; }
.menu button { width: 100%; height: 57px; align-items: center; gap: 5px; padding-left: 2px; }
.menu li + li { margin-top: 4px; }
.menu .hot { background: #e4e4e4; }
.context .menu svg { margin: 0; }

.tri { display: inline-block; border: 6px solid transparent; border-top: 7px solid #3c3c3c; border-bottom: 0; vertical-align: middle; }
.panel h2 .tri { margin-left: 4px; }
.small-tri { border-width: 4px; border-top-width: 5px; }
.big > .small-tri { margin-top: 4px; }
.tri.gray { border-top-color: #8f8f8f; }

.options { flex: none; display: flex; align-items: center; height: 45px; padding-top: 2px; background: #e9eee3; border-bottom: 3px solid #c3c3c3; box-sizing: border-box; font-size: 17px; }
.mode { width: 159px; padding-left: 13px; line-height: 36px; border-right: 2px solid #9b9d97; margin-right: 28px; }
.sel { position: relative; width: 178px; height: 38px; margin: 0 12px 0 7px; border-bottom: 3px solid #b5b9ae; box-sizing: border-box; }
.sel select { width: 100%; height: 36px; padding: 0 7px; }
.chev { position: absolute; right: 7px; top: 14px; fill: none; stroke: #8a8a8a; stroke-width: 3; }
.radio { display: flex; align-items: center; gap: 4px; }
.radio input { appearance: none; width: 18px; height: 18px; margin: 0; border: 2px solid #8a8c87; border-radius: 50%; }

.work { flex: 1; min-height: 0; display: flex; }
aside { flex: none; width: 592px; padding-right: 3px; border-right: 3px solid #c0c0c0; background: #ededed; box-sizing: border-box; display: flex; flex-direction: column; }
.props { display: flex; flex-direction: column; border-bottom: 3px solid #c0c0c0; margin-right: -3px; padding-right: 3px; }
.bar { display: flex; justify-content: space-between; align-items: center; height: 26px; padding: 0 2px; margin-right: -3px; background: #d7d7d7; }
.bar button { width: 16px; height: 16px; display: flex; margin-right: 3px; }
.preview { display: flex; align-items: center; justify-content: space-between; height: 111px; padding: 0 10px 0 2px; margin: 1px 2px 0; border: 2px solid #bfbfbf; background: #f4f4f4; box-sizing: border-box; }
.type { display: flex; height: 46px; margin-top: 2px; }
.typesel { position: relative; width: 410px; height: 42px; margin-left: 1px; background: #f4f4f4; border-bottom: 3px solid #c6c6c6; box-sizing: border-box; }
.typesel select { width: 100%; height: 38px; padding: 0 7px; }
.type button { display: flex; align-items: center; gap: 6px; padding: 0 0 6px 8px; color: #aaa; font-size: 17px; }
.tablebox { height: 428px; background: #fff; margin-left: 1px; border-top: 2px solid #f4f4f4; box-sizing: border-box; }
table { width: 100%; border-collapse: collapse; table-layout: fixed; color: #1c1c1c; font-size: 17px; }
.c1 { width: 283px; }
.c3 { width: 22px; }
tr { height: 28px; }
td, th { height: 28px; padding: 0 0 0 4px; border: 1px solid #ececec; line-height: 24px; text-align: left; box-sizing: border-box; white-space: nowrap; overflow: hidden; }
td.name { padding-left: 13px; border-left: 0; }
.group th { background: #e6e6e6; font-weight: 600; border: 0; color: #333; }
.group th:last-child { padding-left: 2px; }
.group th svg { display: block; }
.dim { color: #8a8a8a; }
td.focus { border: 2px solid #000; }
td.end { padding: 0 2px; border-right: 0; }
.end button { display: block; width: 14px; height: 23px; border: 1px solid #b5b5b5; background: #f4f4f4; }
td input { appearance: none; display: block; width: 17px; height: 17px; margin: 2px 0 0 3px; border: 2px solid #808080; background: #fff; }
td input:checked { background: #808080 url("data:image/svg+xml,%3Csvg xmlns='http://www.w3.org/2000/svg' viewBox='0 0 13 13'%3E%3Cpath d='M2 7l3 3 6-8' fill='none' stroke='white' stroke-width='3'/%3E%3C/svg%3E"); }
.edit { display: block; width: 276px; height: 23px; margin-left: -2px; line-height: 20px; background: #f0f0f0; border: 1px solid #b5b5b5; color: #4a4a4a; }
.tools { display: flex; align-items: center; gap: 6px; height: 40px; padding: 0 5px; }
.tools button { display: flex; background: #f4f4f4; }
.tools .lit { background: #8fd0f0; border: 1px solid #79bde0; border-radius: 3px; }
.tools .apply { margin-left: auto; width: 110px; height: 28px; align-items: center; justify-content: center; border: 2px solid #dadada; border-radius: 3px; background: #efefef; color: #b0b0b0; }
.browser { flex: 1; min-height: 0; background: #fff; }
.browser .bar { height: 27px; }
.search { display: flex; align-items: center; gap: 11px; height: 39px; margin: 13px 13px 13px 14px; padding-left: 12px; border: 2px solid #e3e3e3; box-sizing: border-box; }
.search input { flex: 1; border: 0; background: none; font: inherit; outline: 0; padding: 0; }
.search input::placeholder { color: #b0b0b0; opacity: 1; }
.tree { display: flex; height: 100px; font-size: 22px; line-height: 38px; color: #222; }
.tree svg { flex: none; }
.tree span { flex: 1; padding-left: 15px; }
.sbar { width: 29px; background: #e6e6e6; }
.sbar button { width: 100%; height: 27px; display: flex; align-items: center; justify-content: center; border-bottom: 2px solid #dcdcdc; }

main { flex: 1; min-width: 0; display: flex; flex-direction: column; }
.doctabs { flex: none; display: flex; height: 31px; background: #cacaca; }
.doctabs button { display: flex; align-items: center; gap: 11px; padding-left: 7px; font-size: 17px; }
.doctabs .cur { width: 201px; background: #fff; padding: 0 8px; box-sizing: border-box; }
.doctabs b { font-weight: 700; flex: 1; text-align: left; }
.canvas { position: relative; flex: 1; min-height: 0; overflow: hidden; }
.canvas svg { display: block; width: 100%; height: 100%; }
.num { position: absolute; left: 587px; top: 403px; font: 85px/100px "Liberation Sans", sans-serif; color: #e6efe2; text-shadow: -1px 0 #155a90, 1px 0 #a8621c, 0 -1px #2e3a36, 0 1px #2e3a36; }
.faint { font: 600 10px "Open Sans", sans-serif; fill: #e2e2e2; }
.big-r { font: 700 54px "Open Sans", sans-serif; fill: #fff; }
.marks { position: absolute; left: 0; top: 0; z-index: 3; width: 100%; height: 100%; pointer-events: none; }
</style>

<style>
body { margin: 0; }
.ico { display: block; flex: none; fill: none; stroke: none; stroke-width: 4; }
.ico .k { stroke: #686868; }
.ico .w { fill: #fafafa; }
.ico .thick { stroke-width: 5; }
.ico .thick2 { stroke: #808080; stroke-width: 6; }
.ico .xthick { stroke-width: 11; }
.ico .xt { stroke-width: 8; }
.ico .thin { stroke-width: 3; }
.ico .kf { fill: #606060; }
.ico .ink { fill: #333; }
.ico .inks { stroke: #333; }
.ico .inkc { fill: #fff; stroke: #222; }
.ico .ws { stroke: #fff; }
.ico .bs { stroke: #3d92d6; }
.ico .bf { fill: #68aee0; stroke: #4796d0; stroke-width: 2; }
.ico .bt { fill: #68aee099; stroke: #3d8fd0; stroke-width: 3; }
.ico .bd { fill: #3d92d6; }
.ico .bdk { fill: #4896d2; }
.ico .blt { fill: #84c4f0; stroke: #4796d0; stroke-width: 2; }
.ico .dot { fill: #2f86c8; }
.ico .of { fill: #f8a414; }
.ico .yf { fill: #fbb830; }
.ico .yl { fill: #f0dfb0; }
.ico .brn { fill: #c8882a; }
.ico .redf { fill: #cf4848; }
.ico .rs { stroke: #d9353c; }
.ico .rx { stroke: #e8343c; stroke-width: 8; }
.ico .delx { stroke: #e23a40; stroke-width: 11; }
.ico .g { stroke: #b4b4b4; }
.ico .gs { stroke: #a0a0a0; }
.ico .gf { fill: #e9e9e9; }
.ico .gf2 { fill: #cacaca; }
.ico .gf2s { stroke: #cacaca; stroke-width: 8; }
.ico .gf3 { fill: #d0d0d0; }
.ico .gf4 { fill: #e2e2e2; }
.ico .gd { fill: #a6a6a6; }
.ico .gd2 { fill: #808080; }
.ico .gd3 { stroke: #808080; stroke-width: 8; }
.ico .gd5 { stroke: #8c8c8c; }
.ico .gr { stroke: #34a050; stroke-dasharray: 10 6; }
.ico .grs { stroke: #34a050; stroke-width: 5; }
.ico .grf { fill: #34a050; }
.ico .grn { fill: #4fb56c; stroke: #2f9550; stroke-width: 2; }
.ico .navy { fill: #1c4590; }
.ico .royal { fill: #3a6cc0; }
.ico .sky { fill: #76a0dc; }
.ico .sel { fill: #d0e8f4; stroke: #6fbbe4; stroke-width: 3; }
.ico .sepline { stroke: #aaa; }
.ico .xx { stroke: #777; stroke-width: 7; }
.ico .logor { font: 700 58px "Open Sans", sans-serif; fill: #fff; }
.ico .biga { font: 600 84px "Open Sans", sans-serif; fill: #949494; }
.ico .tagn { font: 600 26px "Open Sans", sans-serif; fill: #a0a0a0; }
.ico .sb { font: 700 33px "Liberation Sans", sans-serif; fill: #4c9edb; }
.ico .sk { font: 700 33px "Liberation Sans", sans-serif; fill: #707070; }
</style>
